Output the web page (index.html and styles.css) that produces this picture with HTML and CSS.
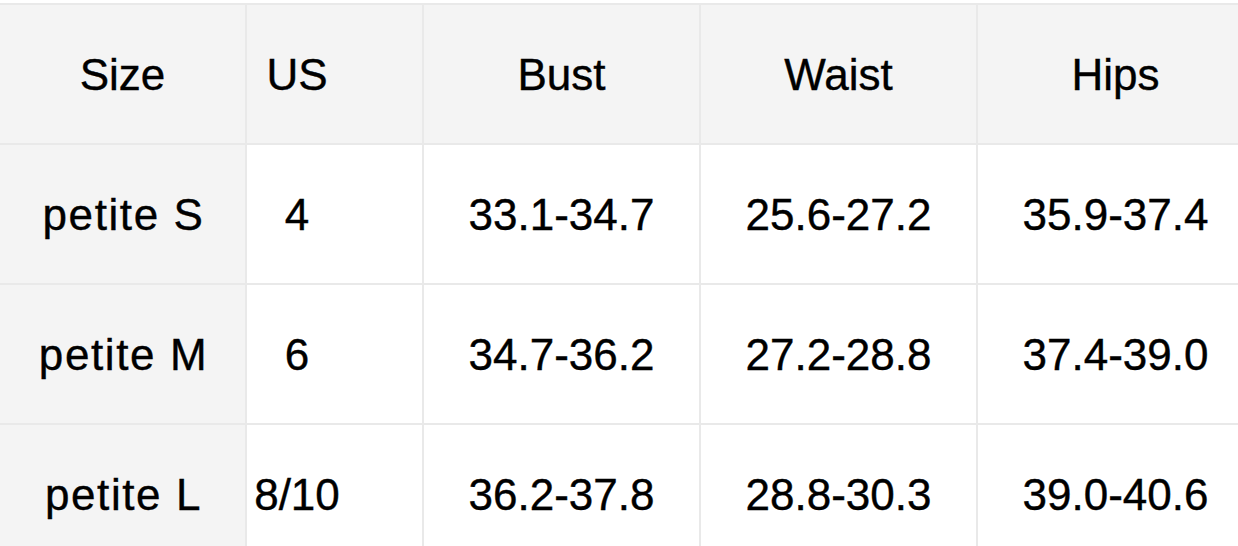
FILE: index.html
```html
<!DOCTYPE html>
<html>
<head>
<meta charset="utf-8">
<link rel="stylesheet" href="styles.css">
</head>
<body>
<div class="chart">
  <div class="cell head first">Size</div>
  <div class="cell head us">US</div>
  <div class="cell head">Bust</div>
  <div class="cell head">Waist</div>
  <div class="cell head">Hips</div>

  <div class="cell first label">petite S</div>
  <div class="cell us">4</div>
  <div class="cell">33.1-34.7</div>
  <div class="cell">25.6-27.2</div>
  <div class="cell">35.9-37.4</div>

  <div class="cell first label">petite M</div>
  <div class="cell us">6</div>
  <div class="cell">34.7-36.2</div>
  <div class="cell">27.2-28.8</div>
  <div class="cell">37.4-39.0</div>

  <div class="cell first label">petite L</div>
  <div class="cell us">8/10</div>
  <div class="cell">36.2-37.8</div>
  <div class="cell">28.8-30.3</div>
  <div class="cell">39.0-40.6</div>
</div>
</body>
</html>
```
FILE: styles.css
```css
html, body {
  margin: 0;
  padding: 0;
  background: #ffffff;
  overflow: hidden;
}
body {
  width: 1238px;
  height: 546px;
}
.chart {
  margin-top: 3px;
  padding-top: 2px;
  width: 1253px;
  display: grid;
  grid-template-columns: 245px 175px 275px 275px 275px;
  grid-auto-rows: 138px;
  gap: 2px;
  background: #e9e9e9;
  font-family: "Liberation Sans", Arial, sans-serif;
  font-size: 44px;
  color: #000000;
  -webkit-text-stroke: 0.4px #000000;
}
.cell {
  background: #ffffff;
  display: flex;
  align-items: center;
  justify-content: center;
  padding-top: 2px;
}
.head, .first {
  background: #f4f4f4;
}
.label {
  letter-spacing: 1.6px;
  padding-left: 2px;
}
.us {
  padding-right: 75px;
}
```
